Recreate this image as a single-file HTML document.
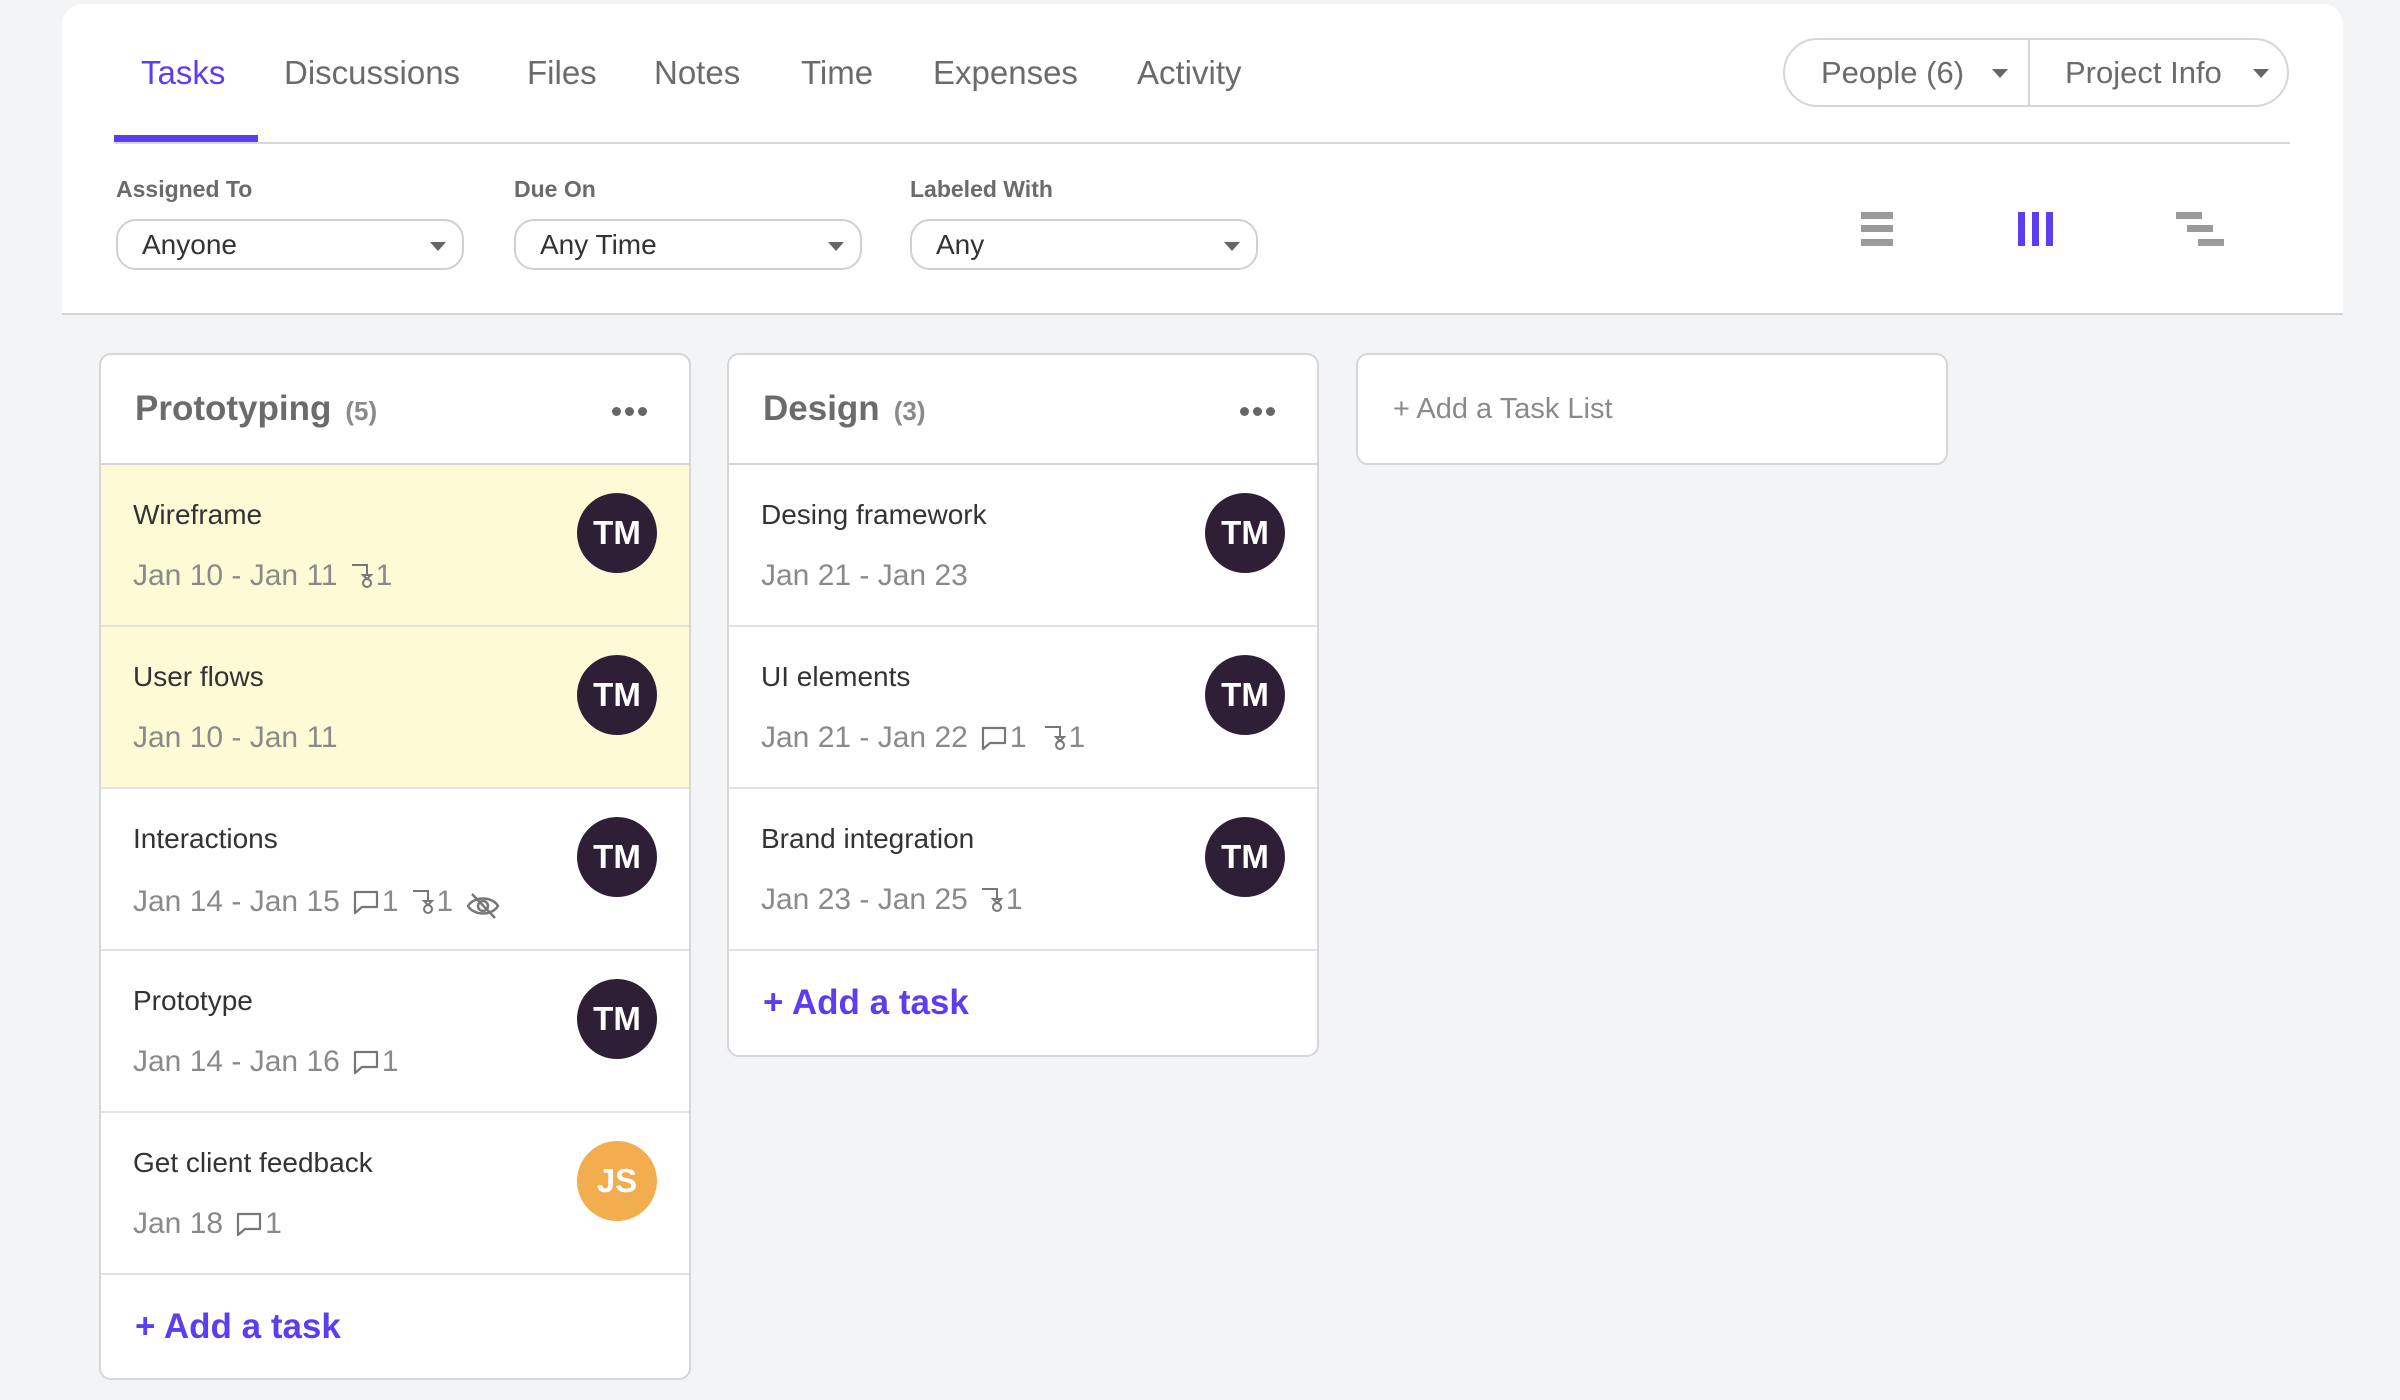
<!DOCTYPE html>
<html><head><meta charset="utf-8"><style>
*{box-sizing:border-box;margin:0;padding:0}
body{width:2400px;height:1400px;background:#f3f4f6;font-family:"Liberation Sans",sans-serif;position:relative;overflow:hidden}
.top{position:absolute;left:62px;top:4px;width:2281px;height:311px;background:#fff;border-radius:20px 20px 0 0;border-bottom:2px solid #d4d4d6}
.a{position:absolute}
.tab{position:absolute;top:50px;font-size:33px;color:#6b6b6b}
.lbl{position:absolute;top:172px;font-size:23px;font-weight:bold;color:#6b6b6b}
.sel{position:absolute;top:215px;width:348px;height:51px;border:2px solid #d0d0d0;border-radius:20px;font-size:28px;color:#333;padding:8px 0 0 24px}
.car{position:absolute;width:0;height:0;border-left:8px solid transparent;border-right:8px solid transparent;border-top:9px solid #666}
.sel .car{right:16px;top:21px}
.col{position:absolute;top:353px;width:592px;background:#fff;border:2px solid #d6d6d8;border-radius:12px;overflow:hidden}
.hd{height:110px;border-bottom:2px solid #d6d6d8;position:relative}
.hd .t{position:absolute;left:34px;top:34px;font-size:35px;font-weight:bold;color:#6b6b6b}
.hd .t span{font-size:26px;color:#8a8a8a;margin-left:14px}
.dots{position:absolute;right:42px;top:48px}
.dots i{display:inline-block;width:9px;height:9px;border-radius:50%;background:#666;margin-left:4px}
.card{height:162px;border-bottom:2px solid #e2e2e4;position:relative}
.card.y{background:#fffad6}
.card .n{position:absolute;left:32px;top:34px;font-size:28px;color:#333}
.card .d{position:absolute;left:32px;top:94px;font-size:30px;color:#8a8a8a;display:flex;align-items:center;white-space:nowrap}
.card .d svg{margin-left:12px}
.card .d b{font-weight:normal;margin-left:2px}
.av{position:absolute;right:32px;top:28px;width:80px;height:80px;border-radius:50%;background:#2e1f36;color:#fff;font-size:33px;font-weight:bold;text-align:center;line-height:80px}
.ft{height:106px;position:relative}
.ft span{position:absolute;left:34px;top:32px;font-size:35px;font-weight:bold;color:#5a3ff0}
</style></head><body>
<div class="top">
  <div class="tab" style="left:79px;color:#5a3ff0">Tasks</div>
  <div class="tab" style="left:222px">Discussions</div>
  <div class="tab" style="left:465px">Files</div>
  <div class="tab" style="left:592px">Notes</div>
  <div class="tab" style="left:739px">Time</div>
  <div class="tab" style="left:871px">Expenses</div>
  <div class="tab" style="left:1075px">Activity</div>
  <div class="a" style="left:52px;top:138px;width:2176px;height:2px;background:#d8d8da"></div>
  <div class="a" style="left:52px;top:131px;width:144px;height:7px;background:#5a3ff0"></div>
  <div class="a" style="left:1721px;top:34px;width:506px;height:69px;border:2px solid #d6d6d8;border-radius:35px"></div>
  <div class="a" style="left:1966px;top:35px;width:2px;height:67px;background:#d6d6d8"></div>
  <div class="tab" style="left:1759px;top:51px;font-size:31px">People (6)</div>
  <div class="car" style="left:1930px;top:65px"></div>
  <div class="tab" style="left:2003px;top:51px;font-size:31px">Project Info</div>
  <div class="car" style="left:2191px;top:65px"></div>
  <div class="lbl" style="left:54px">Assigned To</div>
  <div class="lbl" style="left:452px">Due On</div>
  <div class="lbl" style="left:848px">Labeled With</div>
  <div class="sel" style="left:54px">Anyone<i class="car"></i></div>
  <div class="sel" style="left:452px">Any Time<i class="car"></i></div>
  <div class="sel" style="left:848px">Any<i class="car"></i></div>
  <svg class="a" style="left:1798px;top:208px" width="34" height="36"><rect x="1" y="0" width="32" height="7" fill="#9a9a9a"/><rect x="1" y="13" width="32" height="7" fill="#9a9a9a"/><rect x="1" y="27" width="32" height="7" fill="#9a9a9a"/></svg>
  <svg class="a" style="left:1956px;top:208px" width="36" height="36"><rect x="0" y="0" width="7" height="34" fill="#5a3ff0"/><rect x="14" y="0" width="7" height="34" fill="#5a3ff0"/><rect x="28" y="0" width="7" height="34" fill="#5a3ff0"/></svg>
  <svg class="a" style="left:2114px;top:208px" width="50" height="36"><rect x="0" y="0" width="26" height="7" fill="#9a9a9a"/><rect x="11" y="13" width="26" height="7" fill="#9a9a9a"/><rect x="22" y="27" width="26" height="7" fill="#9a9a9a"/></svg>
</div>

<svg width="0" height="0" style="position:absolute"><defs>
<symbol id="sub" viewBox="0 0 24 28"><path d="M2 3H17V13M17 13l-4 0 4 4 4-4z" fill="none" stroke="#777" stroke-width="2"/><circle cx="17" cy="21" r="4" fill="none" stroke="#777" stroke-width="2"/></symbol>
<symbol id="cmt" viewBox="0 0 28 26"><path d="M3 3H25V18H10L3 24Z" fill="none" stroke="#777" stroke-width="2.2" stroke-linejoin="round"/></symbol>
<symbol id="eye" viewBox="0 0 36 30"><path d="M3 15C9 5 27 5 33 15C27 25 9 25 3 15Z" fill="none" stroke="#777" stroke-width="2.5"/><circle cx="18" cy="15" r="5" fill="none" stroke="#777" stroke-width="2.5"/><path d="M7 3L30 27" stroke="#777" stroke-width="2.5"/></symbol>
</defs></svg>

<div class="col" style="left:99px;height:1027px">
  <div class="hd"><div class="t">Prototyping<span>(5)</span></div><div class="dots"><i></i><i></i><i></i></div></div>
  <div class="card y"><div class="n">Wireframe</div><div class="d">Jan 10 - Jan 11 <svg width="24" height="28"><use href="#sub"/></svg><b>1</b></div><div class="av">TM</div></div>
  <div class="card y"><div class="n">User flows</div><div class="d">Jan 10 - Jan 11</div><div class="av">TM</div></div>
  <div class="card"><div class="n">Interactions</div><div class="d">Jan 14 - Jan 15 <svg width="28" height="26"><use href="#cmt"/></svg><b>1</b><svg width="24" height="28"><use href="#sub"/></svg><b>1</b><svg width="36" height="30" style="margin-top:8px"><use href="#eye"/></svg></div><div class="av">TM</div></div>
  <div class="card"><div class="n">Prototype</div><div class="d">Jan 14 - Jan 16 <svg width="28" height="26"><use href="#cmt"/></svg><b>1</b></div><div class="av">TM</div></div>
  <div class="card"><div class="n">Get client feedback</div><div class="d">Jan 18 <svg width="28" height="26"><use href="#cmt"/></svg><b>1</b></div><div class="av" style="background:#f2ad4e">JS</div></div>
  <div class="ft"><span>+ Add a task</span></div>
</div>

<div class="col" style="left:727px;height:704px">
  <div class="hd"><div class="t">Design<span>(3)</span></div><div class="dots"><i></i><i></i><i></i></div></div>
  <div class="card"><div class="n">Desing framework</div><div class="d">Jan 21 - Jan 23</div><div class="av">TM</div></div>
  <div class="card"><div class="n">UI elements</div><div class="d">Jan 21 - Jan 22 <svg width="28" height="26"><use href="#cmt"/></svg><b>1</b><svg width="24" height="28" style="margin-left:16px"><use href="#sub"/></svg><b>1</b></div><div class="av">TM</div></div>
  <div class="card"><div class="n">Brand integration</div><div class="d">Jan 23 - Jan 25 <svg width="24" height="28"><use href="#sub"/></svg><b>1</b></div><div class="av">TM</div></div>
  <div class="ft"><span>+ Add a task</span></div>
</div>

<div class="a" style="left:1356px;top:353px;width:592px;height:112px;background:#fff;border:2px solid #d6d6d8;border-radius:12px">
  <div class="a" style="left:35px;top:38px;font-size:29px;color:#8a8a8a">+ Add a Task List</div>
</div>
</body></html>
